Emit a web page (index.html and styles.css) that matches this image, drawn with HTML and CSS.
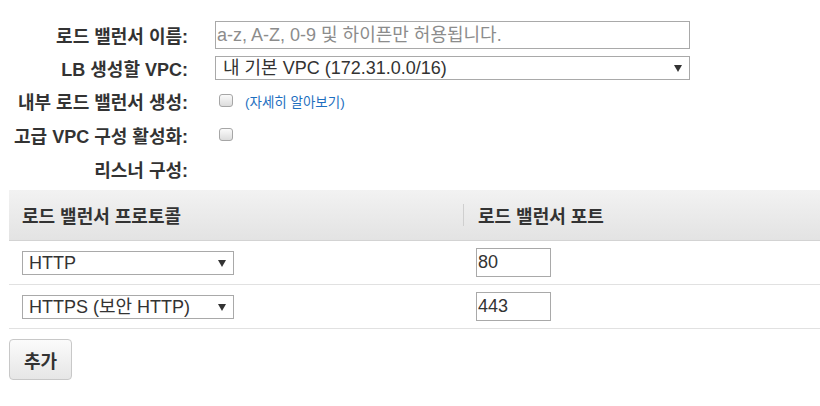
FILE: index.html
```html
<!DOCTYPE html>
<html lang="ko">
<head>
<meta charset="utf-8">
<link rel="stylesheet" href="styles.css">
</head>
<body>
<div class="page">
  <div class="form">
    <label class="lbl">로드 밸런서 이름:</label>
    <div class="field"><input class="text-input" type="text" placeholder="a-z, A-Z, 0-9 및 하이픈만 허용됩니다."></div>

    <label class="lbl">LB 생성할 VPC:</label>
    <div class="field"><div class="sel-wrap wide"><select class="sel"><option>내 기본 VPC (172.31.0.0/16)</option></select></div></div>

    <label class="lbl">내부 로드 밸런서 생성:</label>
    <div class="field"><input type="checkbox" class="cb"><a class="more" href="#">(자세히 알아보기)</a></div>

    <label class="lbl">고급 VPC 구성 활성화:</label>
    <div class="field"><input type="checkbox" class="cb"></div>

    <label class="lbl">리스너 구성:</label>
    <div class="field"></div>
  </div>

  <div class="listeners">
    <div class="thead">
      <div class="th">로드 밸런서 프로토콜</div>
      <div class="th th-sep">로드 밸런서 포트</div>
    </div>
    <div class="tr">
      <div class="td"><div class="sel-wrap small"><select class="sel"><option>HTTP</option></select></div></div>
      <div class="td td-port"><input class="port" type="text" value="80"></div>
    </div>
    <div class="tr">
      <div class="td"><div class="sel-wrap small"><select class="sel"><option>HTTPS (보안 HTTP)</option></select></div></div>
      <div class="td td-port"><input class="port" type="text" value="443"></div>
    </div>
  </div>

  <button class="add-btn">추가</button>
</div>
</body>
</html>
```
FILE: styles.css
```css
* { box-sizing: border-box; }
html, body { margin: 0; padding: 0; background: #fff; }
body {
  font-family: "Liberation Sans", Arial, "Noto Sans CJK KR", sans-serif;
  color: #333;
}
.page { padding: 21px 0 0 9px; }

.form {
  display: grid;
  grid-template-columns: 179px 475px;
  grid-template-rows: 28px 24px 27px 27px 27px;
  column-gap: 27px;
  row-gap: 7px;
}
.lbl {
  display: flex;
  align-items: center;
  justify-content: flex-end;
  font-size: 18px;
  font-weight: bold;
  color: #333;
  white-space: nowrap;
}
.field { display: flex; align-items: center; }

.text-input {
  width: 100%;
  height: 28px;
  border: 1px solid #a9a9a9;
  padding: 0 1px;
  font-family: inherit;
  font-size: 18px;
  color: #333;
  outline: none;
}
.text-input::placeholder { color: #8c8c8c; }

.sel-wrap { position: relative; height: 24px; }
.sel-wrap.wide { width: 100%; }
.sel-wrap.small { width: 212px; }
.sel-wrap::after {
  content: "";
  position: absolute;
  right: 8px;
  top: 9px;
  border-left: 4px solid transparent;
  border-right: 4px solid transparent;
  border-top: 7px solid #333;
  pointer-events: none;
}
.sel {
  -webkit-appearance: none;
  appearance: none;
  width: 100%;
  height: 24px;
  border: 1px solid #a9a9a9;
  border-radius: 0;
  background: #fff;
  padding: 0 20px 0 7px;
  font-family: inherit;
  font-size: 18px;
  color: #333;
}
.small .sel { padding-left: 6px; }

.cb {
  -webkit-appearance: none;
  appearance: none;
  width: 14px;
  height: 13px;
  margin: 0 0 0 4px;
  border: 1px solid #a6a6a6;
  border-radius: 3px;
  background: linear-gradient(#fafafa, #dcdcdc);
}
.more {
  margin-left: 12px;
  font-size: 13.5px;
  color: #1e6fc0;
  text-decoration: none;
}

.listeners { margin-top: 8px; }
.thead {
  display: flex;
  height: 51px;
  background: linear-gradient(#f2f2f2, #e3e3e3);
  border-bottom: 1px solid #d3d3d3;
}
.th {
  display: flex;
  align-items: center;
  font-size: 18px;
  font-weight: bold;
  color: #333;
}
.th:first-child { width: 454px; padding-left: 13px; }
.th-sep { position: relative; padding-left: 15px; }
.th-sep::before {
  content: "";
  position: absolute;
  left: 0;
  top: 14px;
  bottom: 14px;
  border-left: 1px solid #cfcfcf;
}
.tr {
  display: flex;
  height: 44px;
  border-bottom: 1px solid #e1e1e1;
  align-items: center;
}
.td:first-child { width: 467px; padding-left: 13px; }
.td-port { padding-left: 0; }
.port {
  width: 75px;
  height: 29px;
  border: 1px solid #a9a9a9;
  padding: 0 1px;
  font-family: inherit;
  font-size: 18px;
  color: #333;
  outline: none;
}

.add-btn {
  margin-top: 10px;
  width: 63px;
  height: 41px;
  border: 1px solid #c8c8c8;
  border-radius: 4px;
  background: linear-gradient(#fbfbfb, #e6e6e6);
  font-family: inherit;
  font-size: 18px;
  font-weight: bold;
  color: #333;
  padding: 0;
}
```
